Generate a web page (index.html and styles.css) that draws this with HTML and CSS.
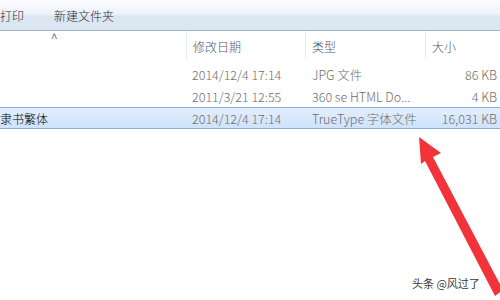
FILE: index.html
```html
<!DOCTYPE html>
<html>
<head>
<meta charset="utf-8">
<link rel="stylesheet" href="styles.css">
</head>
<body>
<div class="window">
  <div class="toolbar">
    <span class="tb-item tb-print">打印</span>
    <span class="tb-item">新建文件夹</span>
  </div>
  <div class="header">
    <div class="col name"><span class="sort">&#x2C4;</span></div>
    <div class="col date sep">修改日期</div>
    <div class="col type sep">类型</div>
    <div class="col size sep">大小</div>
  </div>
  <div class="rows">
    <div class="row">
      <div class="col name"></div>
      <div class="col date">2014/12/4 17:14</div>
      <div class="col type">JPG 文件</div>
      <div class="col size">86 KB</div>
    </div>
    <div class="row">
      <div class="col name"></div>
      <div class="col date">2011/3/21 12:55</div>
      <div class="col type">360 se HTML Do...</div>
      <div class="col size">4 KB</div>
    </div>
    <div class="row selected">
      <div class="col name">隶书繁体</div>
      <div class="col date">2014/12/4 17:14</div>
      <div class="col type">TrueType 字体文件</div>
      <div class="col size">16,031 KB</div>
    </div>
  </div>
  <svg class="arrow" width="500" height="300" viewBox="0 0 500 300">
    <polygon fill="#f2333a" points="419,137 441,153 433,157 503,290 495,296 425,161 421,164"/>
  </svg>
  <div class="watermark">头条 @风过了</div>
</div>
</body>
</html>
```
FILE: styles.css
```css
html, body {
  margin: 0;
  padding: 0;
  background: #ffffff;
}
.window {
  position: relative;
  width: 500px;
  height: 300px;
  overflow: hidden;
  font-family: "Noto Sans CJK SC", "Microsoft YaHei", sans-serif;
  font-size: 12px;
  font-weight: 300;
  background: #ffffff;
}
.toolbar {
  height: 31px;
  box-sizing: border-box;
  display: flex;
  align-items: center;
  background: linear-gradient(to bottom, #fbfcfe 0%, #eef3fa 45%, #dde7f3 55%, #dbe6f3 100%);
  border-bottom: 1px solid #a4b3c7;
  padding-top: 1px;
}
.tb-item {
  color: #1e2a3a;
}
.tb-print {
  margin-right: 30px;
}
.header {
  display: flex;
  height: 29px;
  box-sizing: border-box;
  color: #4c5a6e;
  align-items: stretch;
}
.header .col {
  display: flex;
  align-items: center;
  padding-top: 1px;
}
.header .sep {
  border-left: 1px solid #e5eaf0;
}
.col.name { width: 186px; box-sizing: border-box; position: relative; }
.col.date { width: 119px; box-sizing: border-box; padding-left: 6px; }
.col.type { width: 120px; box-sizing: border-box; padding-left: 6px; }
.col.size { width: 75px; box-sizing: border-box; padding-left: 6px; }
.sort {
  position: absolute;
  left: 51px;
  top: -4px;
  font-size: 11px;
  color: #4c6a8e;
}
.rows {
  padding-top: 3px;
}
.row {
  display: flex;
  height: 22px;
  align-items: center;
  color: #6d6d6d;
  box-sizing: border-box;
  font-size: 12.5px;
}
.row .col.date { padding-left: 6px; }
.row .col.type { padding-left: 7px; }
.row .col.size {
  text-align: right;
  padding-right: 3px;
  padding-left: 0;
}
.row.selected {
  background: linear-gradient(to bottom, #e2eefc 0%, #cfe3fc 100%);
  border-top: 1px solid #84acdd;
  border-bottom: 1px solid #84acdd;
}
.row.selected .col.name {
  color: #000000;
  font-size: 12px;
}
.arrow {
  position: absolute;
  left: 0;
  top: 0;
}
.watermark {
  position: absolute;
  left: 412px;
  top: 275px;
  font-size: 11px;
  font-weight: 400;
  color: #3a3a3a;
  text-shadow: 1px 1px 0 #ffffff, -1px -1px 0 #ffffff;
}
```
